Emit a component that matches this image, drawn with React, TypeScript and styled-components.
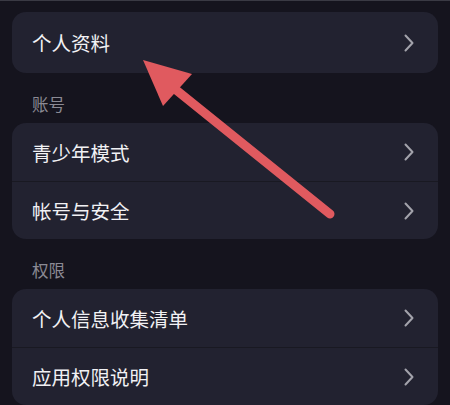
import styled, { createGlobalStyle } from "styled-components";

const GlobalStyle = createGlobalStyle`
   html, body {
      margin: 0;
      padding: 0;
      background: #15141e;
   }
   body {
      font-family: "Noto Sans CJK SC", "Noto Sans", sans-serif;
   }
`;

type Group = { title?: string; items: string[] };

const groups: Group[] = [
   { items: ["个人资料"] },
   { title: "账号", items: ["青少年模式", "帐号与安全"] },
   { title: "权限", items: ["个人信息收集清单", "应用权限说明"] },
];

function Chevron() {
   return (
      <svg width="10" height="18" viewBox="0 0 10 18">
         <polyline
            points="1.5,1.5 8.5,9 1.5,16.5"
            fill="none"
            stroke="#a3a3ab"
            strokeWidth="2"
            strokeLinecap="round"
            strokeLinejoin="round"
         />
      </svg>
   );
}

export default function App() {
   return (
      <>
         <GlobalStyle />
         <Page>
            {groups.map((group, i) => (
               <Section key={i}>
                  {group.title && <Label>{group.title}</Label>}
                  <Card>
                     {group.items.map((item, j) => (
                        <Row key={item} $first={j === 0} $single={group.items.length === 1}>
                           <span>{item}</span>
                           <Chevron />
                        </Row>
                     ))}
                  </Card>
               </Section>
            ))}
            <Arrow viewBox="0 0 450 405" width="450" height="405">
               <line
                  x1="165"
                  y1="80"
                  x2="330"
                  y2="213"
                  stroke="#e05a5f"
                  strokeWidth="9"
                  strokeLinecap="round"
               />
               <polygon points="143,59 192,73 163,105" fill="#e05a5f" />
            </Arrow>
         </Page>
      </>
   );
}

const Page = styled.div`
   position: relative;
   width: 450px;
   height: 405px;
   overflow: hidden;
   box-sizing: border-box;
   border-top: 1px solid #3a3a44;
   padding: 11px 12px 0 12px;
   background: #15141e;
`;

const Section = styled.div`
   display: flex;
   flex-direction: column;
`;

const Label = styled.div`
   padding: 21px 0 9px 20px;
   font-size: 16.5px;
   line-height: 20px;
   color: #8b8a94;
`;

const Card = styled.div`
   background: #222230;
   border-radius: 14px;
   overflow: hidden;
`;

const Row = styled.div<{ $first: boolean; $single: boolean }>`
   display: flex;
   align-items: center;
   justify-content: space-between;
   box-sizing: border-box;
   height: ${(p) => (p.$single ? "61px" : "58px")};
   padding: 0 24px 0 20px;
   border-top: ${(p) => (p.$first ? "none" : "1px solid #191922")};
   font-size: 19.5px;
   color: #f1f1f4;
`;

const Arrow = styled.svg`
   position: absolute;
   top: 0;
   left: 0;
   pointer-events: none;
`;
